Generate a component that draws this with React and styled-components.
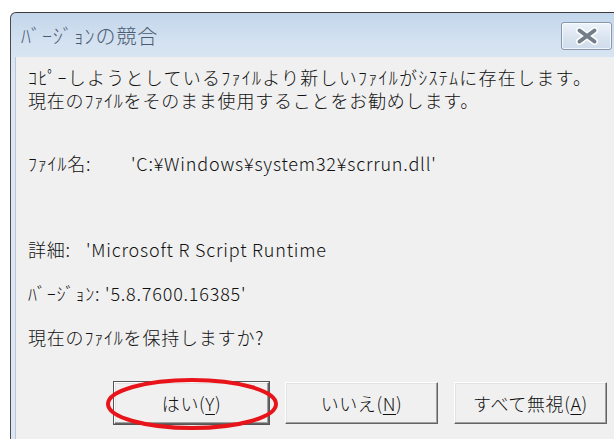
import React from 'react'
import styled, { createGlobalStyle } from 'styled-components'

const GlobalStyle = createGlobalStyle`
  html, body {
    margin: 0;
    padding: 0;
    background: #ffffff;
    overflow: hidden;
  }
  body {
    width: 614px;
    height: 439px;
  }
`

const Desktop = styled.div`
  width: 614px;
  height: 439px;
  padding: 12px 0 0 10px;
  box-sizing: border-box;
  overflow: hidden;
`

const Window = styled.div`
  width: 640px;
  height: 460px;
  display: flex;
  flex-direction: column;
  border-left: 1px solid #4a4a4a;
  border-top: 1px solid #3a3a3a;
  border-radius: 6px 0 0 0;
  background: linear-gradient(to bottom, #c3d6eb 0px, #d4e2f1 30px, #dbe7f3 60px);
  font-family: "Noto Sans CJK JP", "Noto Sans", sans-serif;
  font-weight: 300;
  color: #111;
`

const TitleBar = styled.div`
  height: 44px;
  display: flex;
  align-items: center;
  padding-left: 10px;
  position: relative;
`

const Title = styled.span`
  font-size: 20px;
  color: #4b5b70;
  letter-spacing: 0.9px;
`

const CloseButton = styled.button`
  position: absolute;
  left: 550px;
  top: 9px;
  width: 51px;
  height: 28px;
  padding: 0;
  border: 1px solid #8797ae;
  border-radius: 3px;
  background: linear-gradient(to bottom, #eef3f9 0%, #dbe5f1 50%, #cfdceb 100%);
  box-shadow: inset 0 0 0 1px rgba(255, 255, 255, 0.7);
  display: flex;
  align-items: center;
  justify-content: center;
`

const Panel = styled.div`
  flex: 1;
  margin-left: 4px;
  border-left: 1px solid #b9c7d8;
  background: #f0f0f0;
  padding: 9px 0 0 12px;
  display: flex;
  flex-direction: column;
  font-size: 18px;
  line-height: 23px;
  letter-spacing: 0.8px;
`

const Line = styled.div`
  white-space: nowrap;
  margin-top: ${p => p.$gap || 0}px;
  letter-spacing: ${p => (p.$wide ? '1.25px' : 'inherit')};
`

const Label = styled.span`
  display: inline-block;
  width: ${p => p.$w}px;
`

const ButtonRow = styled.div`
  display: flex;
  gap: 16px;
  margin-top: 33px;
  margin-left: 86px;
  letter-spacing: 0.6px;
`

const Slot = styled.div`
  position: relative;
`

const DialogButton = styled.button`
  width: ${p => p.$w || 153}px;
  height: 42px;
  background: #f0f0f0;
  font-family: "Noto Sans CJK JP", "Noto Sans", sans-serif;
  font-weight: 300;
  font-size: 18px;
  letter-spacing: inherit;
  color: #111;
  padding: 0;
  border: 1px solid;
  border-color: #ffffff #646464 #646464 #ffffff;
  box-shadow: inset -1px -1px 0 #a0a0a0, inset 1px 1px 0 #e3e3e3;
  outline: ${p => (p.$primary ? '1px solid #555' : 'none')};
  u {
    text-underline-offset: 3px;
  }
`

const Mark = styled.svg`
  position: absolute;
  left: -8px;
  top: -4px;
  pointer-events: none;
  overflow: visible;
`

export default function App() {
  return (
    <>
      <GlobalStyle />
      <Desktop>
        <Window>
          <TitleBar>
            <Title>ﾊﾞｰｼﾞｮﾝの競合</Title>
            <CloseButton aria-label="close">
              <svg width="24" height="18" viewBox="0 0 24 18">
                <g strokeLinecap="round">
                  <path d="M4.5 3.5 L19.5 14.5 M19.5 3.5 L4.5 14.5" stroke="#ffffff" strokeWidth="7" />
                  <path d="M4.5 3.5 L19.5 14.5 M19.5 3.5 L4.5 14.5" stroke="#747d8a" strokeWidth="4" />
                </g>
              </svg>
            </CloseButton>
          </TitleBar>
          <Panel>
            <Line $wide>ｺﾋﾟｰしようとしているﾌｧｲﾙより新しいﾌｧｲﾙがｼｽﾃﾑに存在します。</Line>
            <Line>現在のﾌｧｲﾙをそのまま使用することをお勧めします。</Line>
            <Line $gap={40}>
              <Label $w={103}>ﾌｧｲﾙ名:</Label>'C:¥Windows¥system32¥scrrun.dll'
            </Line>
            <Line $gap={63}>
              <Label $w={58}>詳細:</Label>'Microsoft R Script Runtime
            </Line>
            <Line $gap={21}>ﾊﾞｰｼﾞｮﾝ: '5.8.7600.16385'</Line>
            <Line $gap={21}>現在のﾌｧｲﾙを保持しますか?</Line>
            <ButtonRow>
              <Slot>
                <DialogButton $primary $w={155}>
                  はい(<u>Y</u>)
                </DialogButton>
                <Mark width="172" height="52" viewBox="0 0 172 52">
                  <ellipse cx="86" cy="26" rx="84" ry="24" fill="none" stroke="#e8141a" strokeWidth="4" />
                </Mark>
              </Slot>
              <DialogButton>
                いいえ(<u>N</u>)
              </DialogButton>
              <DialogButton>
                すべて無視(<u>A</u>)
              </DialogButton>
            </ButtonRow>
          </Panel>
        </Window>
      </Desktop>
    </>
  )
}
